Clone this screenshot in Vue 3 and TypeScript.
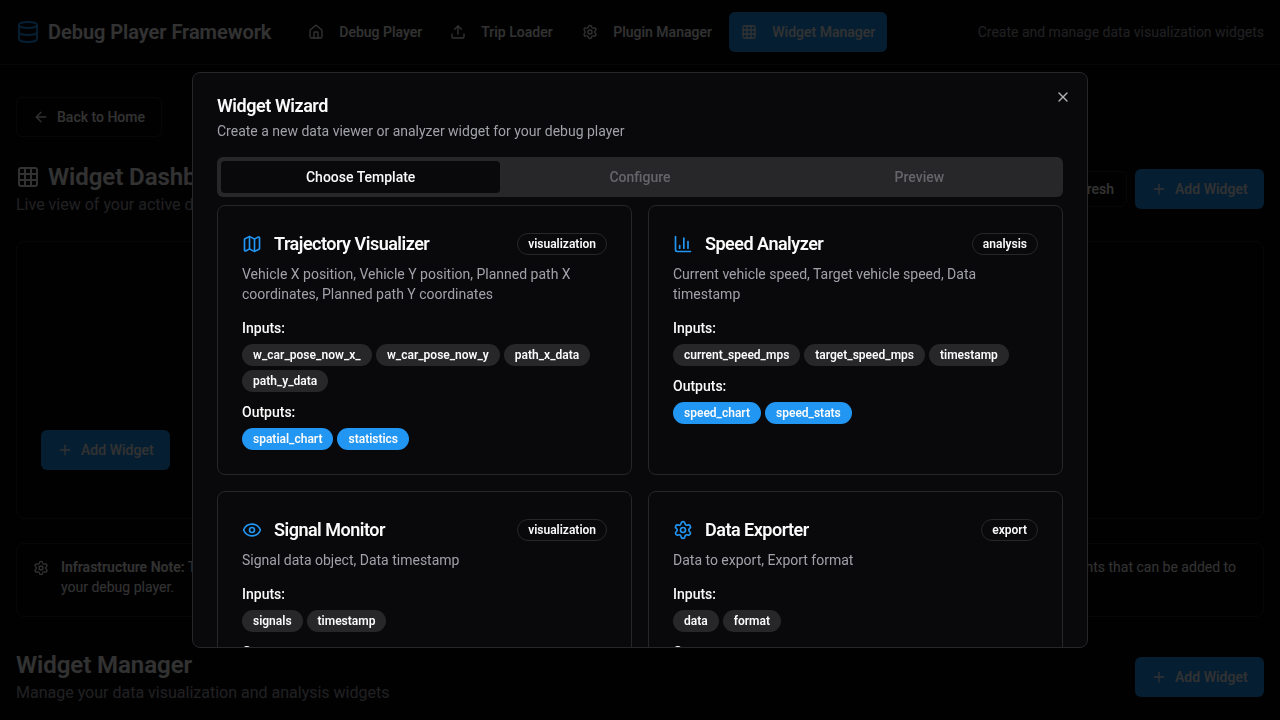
<script setup lang="ts">
interface NavItem { label: string; icon: string; active?: boolean }
interface Template {
  name: string
  icon: string
  category: string
  description: string
  inputs: string[]
  outputs: string[]
}

const icons: Record<string, string> = {
  database: '<ellipse cx="12" cy="5" rx="9" ry="3"/><path d="M3 5V19A9 3 0 0 0 21 19V5"/><path d="M3 12A9 3 0 0 0 21 12"/>',
  house: '<path d="M15 21v-8a1 1 0 0 0-1-1h-4a1 1 0 0 0-1 1v8"/><path d="M3 10a2 2 0 0 1 .709-1.528l7-5.999a2 2 0 0 1 2.582 0l7 5.999A2 2 0 0 1 21 10v9a2 2 0 0 1-2 2H5a2 2 0 0 1-2-2z"/>',
  upload: '<path d="M12 3v12"/><path d="m17 8-5-5-5 5"/><path d="M21 15v4a2 2 0 0 1-2 2H5a2 2 0 0 1-2-2v-4"/>',
  settings: '<path d="M9.671 4.136a2.34 2.34 0 0 1 4.659 0 2.34 2.34 0 0 0 3.319 1.915 2.34 2.34 0 0 1 2.33 4.033 2.34 2.34 0 0 0 0 3.831 2.34 2.34 0 0 1-2.33 4.033 2.34 2.34 0 0 0-3.319 1.915 2.34 2.34 0 0 1-4.659 0 2.34 2.34 0 0 0-3.32-1.915 2.34 2.34 0 0 1-2.33-4.033 2.34 2.34 0 0 0 0-3.831A2.34 2.34 0 0 1 6.35 6.051a2.34 2.34 0 0 0 3.319-1.915"/><circle cx="12" cy="12" r="3"/>',
  grid: '<rect width="18" height="18" x="3" y="3" rx="2"/><path d="M3 9h18"/><path d="M3 15h18"/><path d="M9 3v18"/><path d="M15 3v18"/>',
  back: '<path d="m12 19-7-7 7-7"/><path d="M19 12H5"/>',
  plus: '<path d="M5 12h14"/><path d="M12 5v14"/>',
  close: '<path d="M18 6 6 18"/><path d="m6 6 12 12"/>',
  map: '<path d="M14.106 5.553a2 2 0 0 0 1.788 0l3.659-1.83A1 1 0 0 1 21 4.619v12.764a1 1 0 0 1-.553.894l-4.553 2.277a2 2 0 0 1-1.788 0l-4.212-2.106a2 2 0 0 0-1.788 0l-3.659 1.83A1 1 0 0 1 3 19.381V6.618a1 1 0 0 1 .553-.894l4.553-2.277a2 2 0 0 1 1.788 0z"/><path d="M15 5.764v15"/><path d="M9 3.236v15"/>',
  chart: '<path d="M3 3v16a2 2 0 0 0 2 2h16"/><path d="M18 17V9"/><path d="M13 17V5"/><path d="M8 17v-3"/>',
  eye: '<path d="M2.062 12.348a1 1 0 0 1 0-.696 10.75 10.75 0 0 1 19.876 0 1 1 0 0 1 0 .696 10.75 10.75 0 0 1-19.876 0"/><circle cx="12" cy="12" r="3"/>',
}

const nav: NavItem[] = [
  { label: 'Debug Player', icon: 'house' },
  { label: 'Trip Loader', icon: 'upload' },
  { label: 'Plugin Manager', icon: 'settings' },
  { label: 'Widget Manager', icon: 'grid', active: true },
]

const steps: string[] = ['Choose Template', 'Configure', 'Preview']

const templates: Template[] = [
  {
    name: 'Trajectory Visualizer', icon: 'map', category: 'visualization',
    description: 'Vehicle X position, Vehicle Y position, Planned path X coordinates, Planned path Y coordinates',
    inputs: ['w_car_pose_now_x_', 'w_car_pose_now_y', 'path_x_data', 'path_y_data'],
    outputs: ['spatial_chart', 'statistics'],
  },
  {
    name: 'Speed Analyzer', icon: 'chart', category: 'analysis',
    description: 'Current vehicle speed, Target vehicle speed, Data timestamp',
    inputs: ['current_speed_mps', 'target_speed_mps', 'timestamp'],
    outputs: ['speed_chart', 'speed_stats'],
  },
  {
    name: 'Signal Monitor', icon: 'eye', category: 'visualization',
    description: 'Signal data object, Data timestamp',
    inputs: ['signals', 'timestamp'],
    outputs: [],
  },
  {
    name: 'Data Exporter', icon: 'settings', category: 'export',
    description: 'Data to export, Export format',
    inputs: ['data', 'format'],
    outputs: [],
  },
]
</script>

<template>
  <div class="page">
    <header class="topbar">
      <div class="brand">
        <svg class="icon i24 blue" viewBox="0 0 24 24" v-html="icons.database"></svg>
        <span>Debug Player Framework</span>
      </div>
      <nav class="nav">
        <a v-for="n in nav" :key="n.label" class="nav-item" :class="{ active: n.active }">
          <svg class="icon i16" viewBox="0 0 24 24" v-html="icons[n.icon]"></svg>
          {{ n.label }}
        </a>
      </nav>
      <span class="tagline">Create and manage data visualization widgets</span>
    </header>

    <main class="main">
      <button class="btn outline back">
        <svg class="icon i16" viewBox="0 0 24 24" v-html="icons.back"></svg>Back to Home
      </button>
      <section class="section-head">
        <div>
          <h2 class="heading">
            <svg class="icon i24" viewBox="0 0 24 24" v-html="icons.grid"></svg>Widget Dashboard
          </h2>
          <p class="sub">Live view of your active data widgets</p>
        </div>
        <div class="actions">
          <button class="btn outline small">Refresh</button>
          <button class="btn primary">
            <svg class="icon i16" viewBox="0 0 24 24" v-html="icons.plus"></svg>Add Widget
          </button>
        </div>
      </section>
      <section class="panel">
        <button class="btn primary">
          <svg class="icon i16" viewBox="0 0 24 24" v-html="icons.plus"></svg>Add Widget
        </button>
      </section>
      <section class="note">
        <svg class="icon i16" viewBox="0 0 24 24" v-html="icons.settings"></svg>
        <div class="note-text">
          <div class="note-line">
            <span><strong>Infrastructure Note:</strong> This</span>
            <span>components that can be added to</span>
          </div>
          <div>your debug player.</div>
        </div>
      </section>
      <section class="section-head manager">
        <div>
          <h2 class="heading">Widget Manager</h2>
          <p class="sub">Manage your data visualization and analysis widgets</p>
        </div>
        <button class="btn primary">
          <svg class="icon i16" viewBox="0 0 24 24" v-html="icons.plus"></svg>Add Widget
        </button>
      </section>
    </main>
  </div>

  <div class="overlay"></div>
  <div class="dialog-wrap">
    <div class="dialog" role="dialog">
      <button class="close">
        <svg class="icon i16" viewBox="0 0 24 24" v-html="icons.close"></svg>
      </button>
      <div class="dialog-head">
        <h2>Widget Wizard</h2>
        <p>Create a new data viewer or analyzer widget for your debug player</p>
      </div>
      <div class="tabs">
        <button v-for="(s, i) in steps" :key="s" class="tab" :class="{ current: i === 0 }">{{ s }}</button>
      </div>
      <div class="cards">
        <article v-for="t in templates" :key="t.name" class="card">
          <div class="card-head">
            <svg class="icon i20 blue" viewBox="0 0 24 24" v-html="icons[t.icon]"></svg>
            <h3>{{ t.name }}</h3>
            <span class="badge line">{{ t.category }}</span>
          </div>
          <p class="desc">{{ t.description }}</p>
          <div class="group">
            <div class="label"><span>Inputs:</span></div>
            <div class="badges">
              <span v-for="b in t.inputs" :key="b" class="badge">{{ b }}</span>
            </div>
          </div>
          <div class="group">
            <div class="label"><span>Outputs:</span></div>
            <div class="badges">
              <span v-for="b in t.outputs" :key="b" class="badge solid">{{ b }}</span>
            </div>
          </div>
        </article>
      </div>
    </div>
  </div>
</template>

<style>
html, body { background: #09090b; overflow: hidden; }
</style>

<style scoped>
* { box-sizing: border-box; }
.page, .dialog {
  font-family: Roboto, "Liberation Sans", sans-serif;
  font-size: 16px;
  line-height: 24px;
  color: #fafafa;
}
.page { height: 720px; overflow: hidden; background: #09090b; }
h2, h3, p { margin: 0; }
button { font: inherit; color: inherit; border: 0; background: none; padding: 0; }
.icon { flex: none; display: block; fill: none; stroke: currentColor; stroke-width: 2; stroke-linecap: round; stroke-linejoin: round; }
.i16 { width: 16px; height: 16px; }
.i20 { width: 20px; height: 20px; }
.i24 { width: 24px; height: 24px; }
.blue { color: #2196f3; }

.topbar { height: 65px; padding: 0 16px; display: flex; align-items: center; border-bottom: 1px solid #27272a; }
.brand { display: flex; align-items: center; gap: 8px; width: 256px; margin-right: 24px; font-size: 20px; line-height: 28px; font-weight: 600; letter-spacing: -0.04px; white-space: nowrap; }
.nav { display: flex; gap: 4px; }
.nav-item { height: 40px; padding: 0 0 0 12px; border-radius: 6px; display: flex; align-items: center; gap: 15.3px; font-size: 14px; font-weight: 500; white-space: nowrap; }
.nav-item:nth-child(1) { width: 138px; }
.nav-item:nth-child(2) { width: 128px; }
.nav-item:nth-child(3) { width: 155px; }
.nav-item:nth-child(4) { width: 158px; }
.nav-item.active { background: #2196f3; }
.tagline { margin-left: auto; font-size: 14px; color: #a1a1aa; }

.main { padding: 32px 16px; }
.btn { display: inline-flex; align-items: center; gap: 8px; height: 40px; padding: 0 16px; border-radius: 6px; font-size: 14px; line-height: 20px; font-weight: 500; white-space: nowrap; }
.btn.outline { border: 1px solid #27272a; }
.btn.small { height: 36px; padding: 0 12px; }
.btn.primary { width: 129px; letter-spacing: 0.03px; background: #2196f3; }
.back { display: flex; }
.section-head { margin-top: 24px; display: flex; justify-content: space-between; align-items: center; }
.manager { margin-top: 32px; }
.heading { display: flex; align-items: center; gap: 8px; font-size: 24px; line-height: 32px; font-weight: 600; letter-spacing: -0.05px; }
.sub { color: #a1a1aa; }
.actions { display: flex; align-items: center; gap: 8px; }
.panel { margin-top: 24px; height: 278px; border: 1px solid #27272a; border-radius: 8px; padding: 48px 24px; display: flex; align-items: flex-end; }
.note { margin-top: 24px; height: 74px; border: 1px solid #27272a; border-radius: 8px; padding: 16px; display: flex; gap: 12px; font-size: 14px; line-height: 20px; }
.note-text { flex: 1; margin-top: -3px; }
.note-line { display: flex; justify-content: space-between; width: 1175px; }
.note strong { font-weight: 600; }

.overlay { position: fixed; inset: 0; background: rgba(0, 0, 0, 0.8); }
.dialog-wrap { position: fixed; inset: 0; display: flex; align-items: center; justify-content: center; }
.dialog { position: relative; width: 896px; height: 576px; overflow: hidden; padding: 24px; border: 1px solid #27272a; border-radius: 8px; background: #09090b; box-shadow: 0 10px 15px -3px rgba(0, 0, 0, 0.1), 0 4px 6px -4px rgba(0, 0, 0, 0.1); }
.close { position: absolute; top: 16px; right: 16px; opacity: 0.7; }
.dialog-head h2 { font-size: 18px; line-height: 18px; font-weight: 600; letter-spacing: -0.025em; }
.dialog-head p { margin-top: 6px; font-size: 14px; line-height: 20px; color: #a1a1aa; }
.tabs { margin-top: 16px; height: 40px; padding: 4px; border-radius: 6px; background: #27272a; display: grid; grid-template-columns: repeat(3, 1fr); }
.tab { height: 32px; border-radius: 4px; font-size: 14px; line-height: 20px; font-weight: 500; color: #a1a1aa; opacity: 0.5; }
.tab.current { background: #09090b; color: #fafafa; opacity: 1; }
.cards { margin-top: 8px; display: grid; grid-template-columns: 1fr 1fr; gap: 16px; }
.card { border: 1px solid #27272a; border-radius: 8px; padding: 24px; }
.card-head { display: flex; align-items: center; gap: 12px; height: 28px; }
.card-head h3 { flex: 1; font-size: 18px; line-height: 28px; font-weight: 600; letter-spacing: -0.5px; }
.desc { margin: 6px 0 12px; font-size: 14px; line-height: 20px; color: #a1a1aa; }
.group + .group { margin-top: 8px; }
.label span { font-size: 14px; font-weight: 500; line-height: 20px; }
.badges { margin-top: 4px; display: flex; flex-wrap: wrap; gap: 4px; }
.badge { padding: 2px 10px; border: 1px solid transparent; border-radius: 999px; font-size: 12px; line-height: 16px; font-weight: 600; background: #27272a; }
.badge:first-child:nth-last-child(4) { min-width: 130px; letter-spacing: 0.03px; }
.badge.line { background: none; border-color: #27272a; }
.badge.solid { background: #2196f3; }
</style>
